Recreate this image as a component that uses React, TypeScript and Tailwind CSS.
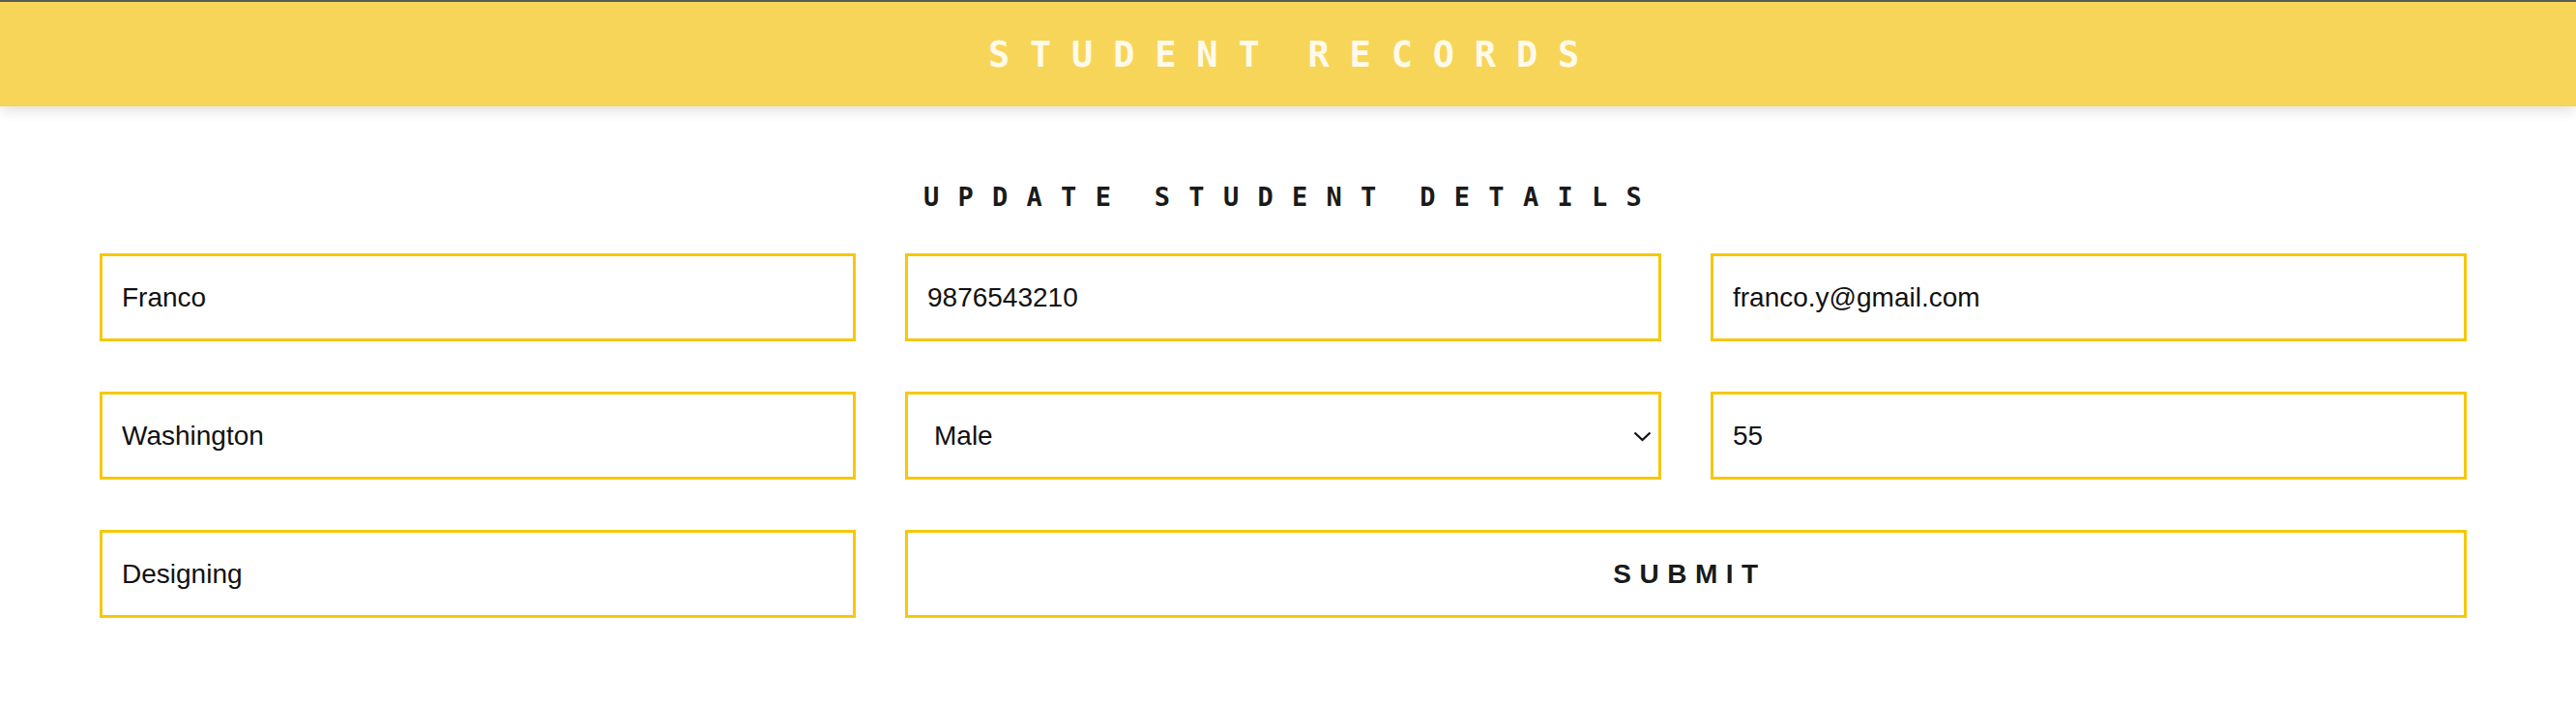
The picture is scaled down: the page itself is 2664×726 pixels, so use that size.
import { useState } from 'react';

const fieldBox =
  'h-[91px] w-full border-[3px] border-[#f5c80a] bg-white pl-[20px] text-[28px] text-[#111] outline-none';

export default function App() {
  const [gender, setGender] = useState('Male');

  return (
    <div className="min-h-screen bg-white" style={{ fontFamily: '"Liberation Sans", Arial, sans-serif' }}>
      <div className="h-[2px] bg-[#5c5c5c]" />
      <header className="relative z-10 flex h-[108px] items-center justify-center bg-[#f7d558] shadow-[0_5px_12px_rgba(0,0,0,0.12)]">
        <h1
          className="pl-[12px] text-[37px] font-bold uppercase leading-none tracking-[20.8px] text-[#fffaea] [word-spacing:-14px]"
          style={{ fontFamily: '"DejaVu Sans Mono", monospace' }}
        >
          Student Records
        </h1>
      </header>

      <main className="pt-[74px]">
        <h2
          className="mb-[38px] h-[40px] pl-[8px] text-center text-[27px] font-bold uppercase leading-[40px] tracking-[19.3px] text-[#1a1a1a] [word-spacing:-10px]"
          style={{ fontFamily: '"DejaVu Sans Mono", monospace' }}
        >
          Update Student Details
        </h2>

        <form
          className="ml-[103px] grid w-[2448px] grid-cols-3 gap-x-[51px] gap-y-[52px]"
          onSubmit={(e) => e.preventDefault()}
        >
          <input className={fieldBox} defaultValue="Franco" />
          <input className={fieldBox} defaultValue="9876543210" />
          <input className={fieldBox} defaultValue="franco.y@gmail.com" />

          <input className={fieldBox} defaultValue="Washington" />
          <div className="relative">
            <select
              value={gender}
              onChange={(e) => setGender(e.target.value)}
              className="h-[91px] w-full appearance-none border-[3px] border-[#f5c80a] bg-white pl-[27px] text-[28px] text-[#111] outline-none"
            >
              <option>Male</option>
              <option>Female</option>
            </select>
            <svg
              className="pointer-events-none absolute right-[10px] top-[41px] h-[11px] w-[19px]"
              viewBox="0 0 19 11"
              fill="none"
              stroke="#111"
              strokeWidth="2.2"
            >
              <path d="M1.5 1.5 L9.5 9 L17.5 1.5" />
            </svg>
          </div>
          <input className={fieldBox} defaultValue="55" />

          <input className={fieldBox} defaultValue="Designing" />
          <button
            type="submit"
            className="col-span-2 h-[91px] border-[3px] border-[#f5c80a] bg-white pl-[8px] text-[28px] font-bold uppercase tracking-[8.5px] text-[#1a1a1a]"
          >
            Submit
          </button>
        </form>
      </main>
    </div>
  );
}
